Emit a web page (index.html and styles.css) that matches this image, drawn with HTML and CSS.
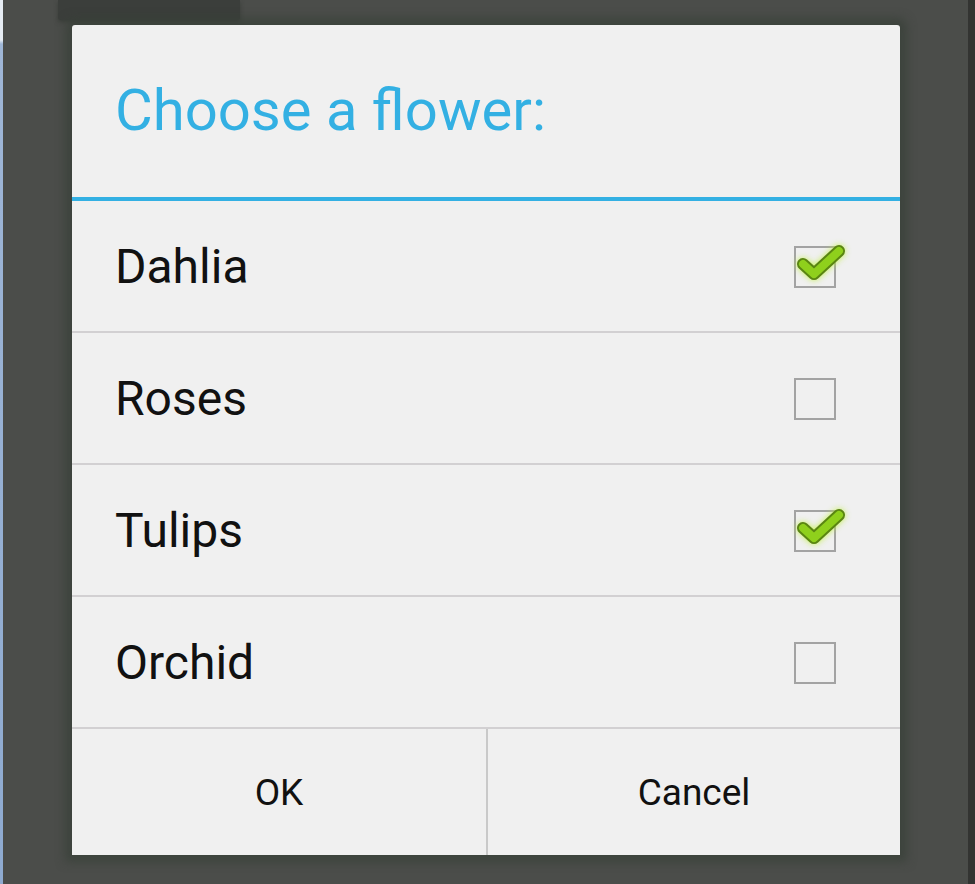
FILE: index.html
```html
<!doctype html>
<html lang="en">
  <head>
    <meta charset="UTF-8" />
    <meta name="viewport" content="width=device-width, initial-scale=1.0" />
    <title>Choose a flower</title>
    <link rel="stylesheet" href="styles.css">
  </head>
  <body>
    <div class="screen">
      <div class="edge-left"></div>

      <div class="stage">
        <div class="action-bar"></div>

        <!-- Multi choice dialog -->
        <div class="dialog">
          <div class="dialog-title">Choose a flower:</div>

          <div class="choice-list">
            <div class="choice">
              <span class="choice-label">Dahlia</span>
              <span class="checkbox checked">
                <svg class="tick" viewBox="0 0 52 42" width="52" height="42">
                  <polyline points="8,22 19,32 44,9" class="tick-edge" />
                  <polyline points="8,22 19,32 44,9" class="tick-fill" />
                </svg>
              </span>
            </div>
            <div class="choice">
              <span class="choice-label">Roses</span>
              <span class="checkbox"></span>
            </div>
            <div class="choice">
              <span class="choice-label">Tulips</span>
              <span class="checkbox checked">
                <svg class="tick" viewBox="0 0 52 42" width="52" height="42">
                  <polyline points="8,22 19,32 44,9" class="tick-edge" />
                  <polyline points="8,22 19,32 44,9" class="tick-fill" />
                </svg>
              </span>
            </div>
            <div class="choice">
              <span class="choice-label">Orchid</span>
              <span class="checkbox"></span>
            </div>
          </div>

          <div class="dialog-buttons">
            <button class="dialog-button">OK</button>
            <button class="dialog-button">Cancel</button>
          </div>
        </div>
      </div>

      <div class="edge-right"></div>
    </div>
  </body>
</html>
```

FILE: styles.css
```css
/* Holo light dialog over dim screen */
:root {
  --holo-blue: #33b0e3;
  --screen-dim: #4b4d4a;
  --dialog-bg: #f0f0f0;
  --divider: #d2d0d2;
  --text: #111;
}

body {
  margin: 0;
  padding: 0;
  background: var(--screen-dim);
  font-family: Roboto, 'Liberation Sans', Arial, sans-serif;
}

.screen {
  display: flex;
  width: 975px;
  height: 884px;
  overflow: hidden;
}

.edge-left {
  width: 3px;
  background: linear-gradient(180deg, #e6ecf3 0, #e6ecf3 40px, #9fb6d6 44px, #8eaad0 100%);
}

.edge-right {
  width: 7px;
  background: #333432;
}

.stage {
  flex: 1;
  display: flex;
  flex-direction: column;
}

.action-bar {
  width: 182px;
  height: 20px;
  margin-left: 55px;
  background: #3b3e3b;
  border-radius: 0 0 3px 3px;
  box-shadow: 0 2px 4px rgba(40, 45, 40, 0.5);
}

.dialog {
  margin: 5px 0 0 69px;
  width: 828px;
  height: 830px;
  background: var(--dialog-bg);
  border-radius: 3px 3px 0 0;
  box-shadow: 0 0 10px 7px rgba(56, 64, 56, 0.75);
  display: flex;
  flex-direction: column;
}

.dialog-title {
  height: 176px;
  box-sizing: border-box;
  padding: 0 0 2px 43px;
  display: flex;
  align-items: center;
  color: var(--holo-blue);
  font-size: 58px;
  border-bottom: 4px solid var(--holo-blue);
}

.choice-list {
  display: flex;
  flex-direction: column;
}

.choice {
  height: 132px;
  box-sizing: border-box;
  padding: 0 64px 0 43px;
  display: flex;
  align-items: center;
  justify-content: space-between;
  border-bottom: 2px solid var(--divider);
}

.choice-label {
  color: var(--text);
  font-size: 48px;
}

.checkbox {
  position: relative;
  width: 42px;
  height: 42px;
  box-sizing: border-box;
  border: 2px solid #a3a3a3;
  margin-top: 2px;
}

.tick {
  position: absolute;
  left: -1px;
  top: -6px;
  filter: drop-shadow(0 0 3px rgba(190, 240, 60, 0.9));
}

.tick-edge {
  fill: none;
  stroke: #5a8512;
  stroke-width: 12;
  stroke-linecap: round;
  stroke-linejoin: round;
}

.tick-fill {
  fill: none;
  stroke: #8fd01c;
  stroke-width: 8;
  stroke-linecap: round;
  stroke-linejoin: round;
}

.dialog-buttons {
  flex: 1;
  display: grid;
  grid-template-columns: 1fr 1fr;
}

.dialog-button {
  background: transparent;
  border: none;
  font-family: inherit;
  font-size: 37px;
  color: var(--text);
  padding: 0;
}

.dialog-button + .dialog-button {
  border-left: 2px solid #c9c9c9;
}
```
